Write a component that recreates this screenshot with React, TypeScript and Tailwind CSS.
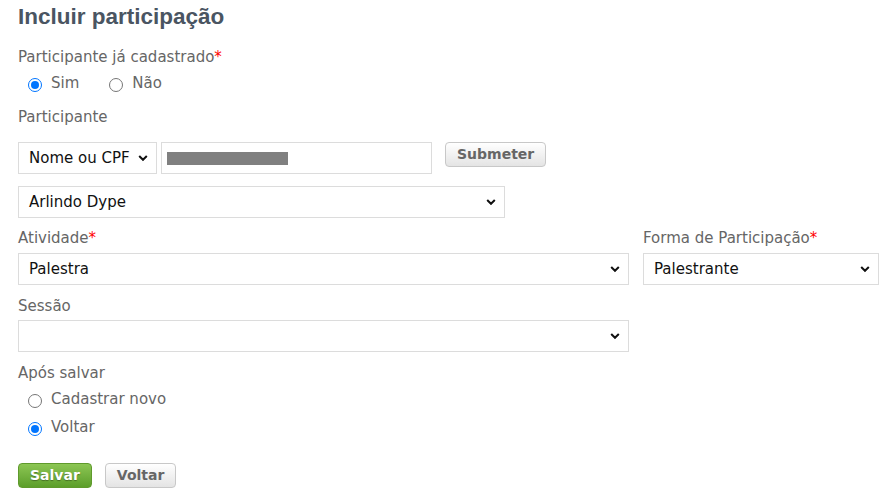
import { ReactNode } from 'react'

const font = { fontFamily: '"DejaVu Sans", Verdana, sans-serif' }

const Chevron = () => (
  <svg width="10" height="7" viewBox="0 0 10 7" className="pointer-events-none absolute right-[8px] top-1/2 -translate-y-1/2">
    <path d="M1.2 1.5 L5 5.3 L8.8 1.5" fill="none" stroke="#111" strokeWidth="2" />
  </svg>
)

const Select = ({ value, className }: { value: string; className: string }) => (
  <div className={`relative h-[32px] border border-[#dcdcdc] bg-white ${className}`}>
    <div className="flex h-full items-center pl-[10px] text-[15px] text-[#111]">{value}</div>
    <Chevron />
  </div>
)

const Label = ({ children, required }: { children: ReactNode; required?: boolean }) => (
  <div className="text-[15px] leading-[18px] text-[#666]">
    {children}
    {required && <span className="text-[#f00]">*</span>}
  </div>
)

const Radio = ({ checked, label }: { checked?: boolean; label: string }) => (
  <label className="flex items-center gap-[9px] text-[15px] leading-[21px] text-[#666]">
    <span
      className={`flex h-[14px] w-[14px] items-center justify-center rounded-full border ${
        checked ? 'border-[#0075ff]' : 'border-[#767676]'
      }`}
    >
      {checked && <span className="h-[8px] w-[8px] rounded-full bg-[#0075ff]" />}
    </span>
    <span className="-mt-[3px]">{label}</span>
  </label>
)

const GrayButton = ({ children, className }: { children: ReactNode; className?: string }) => (
  <button
    className={`h-[25px] rounded-[4px] border border-[#c8c8c8] bg-gradient-to-b from-white to-[#e4e4e4] px-[11px] text-[14px] font-bold text-[#666] ${className ?? ''}`}
  >
    {children}
  </button>
)

export default function App() {
  return (
    <div className="min-h-screen bg-white px-[18px] pt-[4px]" style={font}>
      <h1
        className="text-[22.5px] font-bold leading-[26px] text-[#4a5562]"
        style={{ fontFamily: '"Liberation Sans", Arial, sans-serif' }}
      >
        Incluir participação
      </h1>

      <div className="mt-[18px]">
        <Label required>Participante já cadastrado</Label>
        <div className="mt-[10px] flex items-center gap-[30px] pl-[10px]">
          <Radio checked label="Sim" />
          <Radio label="Não" />
        </div>
      </div>

      <div className="mt-[14px]">
        <Label>Participante</Label>
        <div className="mt-[16px] flex items-start">
          <Select value="Nome ou CPF" className="w-[139px]" />
          <div className="ml-[4px] flex h-[32px] w-[271px] items-center border border-[#dcdcdc] bg-white pl-[5px]">
            <div className="h-[13px] w-[121px] bg-[#808080]" />
          </div>
          <GrayButton className="ml-[13px]">Submeter</GrayButton>
        </div>
        <Select value="Arlindo Dype" className="mt-[12px] w-[487px]" />
      </div>

      <div className="mt-[11px] flex gap-[14px]">
        <div>
          <Label required>Atividade</Label>
          <Select value="Palestra" className="mt-[6px] w-[611px]" />
        </div>
        <div>
          <Label required>Forma de Participação</Label>
          <Select value="Palestrante" className="mt-[6px] w-[236px]" />
        </div>
      </div>

      <div className="mt-[12px]">
        <Label>Sessão</Label>
        <Select value="" className="mt-[5px] w-[611px]" />
      </div>

      <div className="mt-[12px]">
        <Label>Após salvar</Label>
        <div className="mt-[10px] flex flex-col gap-[10px] pl-[10px]">
          <Radio label="Cadastrar novo" />
          <Radio checked label="Voltar" />
        </div>
      </div>

      <div className="mt-[25px] flex gap-[13px]">
        <button className="h-[25px] rounded-[4px] border border-[#5f9a2c] bg-gradient-to-b from-[#8cc653] to-[#5c9e2a] px-[11px] text-[14px] font-bold text-white [text-shadow:0_1px_1px_rgba(0,0,0,0.35)]">
          Salvar
        </button>
        <GrayButton>Voltar</GrayButton>
      </div>
    </div>
  )
}
